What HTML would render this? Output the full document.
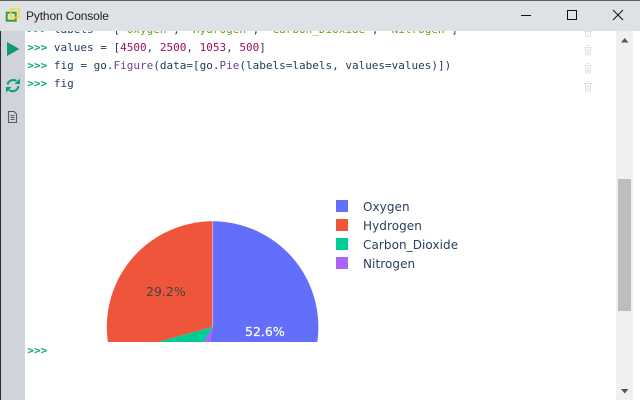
<!DOCTYPE html>
<html><head><meta charset="utf-8"><style>
html,body{margin:0;padding:0;width:640px;height:400px;overflow:hidden;background:#fff}
.a{position:absolute}
#code{overflow:hidden}
#code div{position:absolute;left:27.4px;white-space:pre;font:11px/18px "DejaVu Sans Mono","Liberation Mono",monospace;color:#1f3a5a}
.p{color:#10a37f;font-weight:bold}.n{color:#990f5f}.s{color:#5aa800}.f{color:#6b3fa0}
.lg{position:absolute;left:363px;font:12px/16px "DejaVu Sans",sans-serif;color:#2a3f5f;letter-spacing:.07px}
</style></head><body>
<div id="code" class="a" style="left:0;top:0;width:640px;height:400px">
<div style="top:21px"><span class="p">&gt;&gt;&gt;</span> labels = [<span class="s">'Oxygen'</span>, <span class="s">'Hydrogen'</span>, <span class="s">'Carbon_Dioxide'</span>, <span class="s">'Nitrogen'</span>]</div>
<div style="top:39px"><span class="p">&gt;&gt;&gt;</span> values = [<span class="n">4500</span>, <span class="n">2500</span>, <span class="n">1053</span>, <span class="n">500</span>]</div>
<div style="top:57px"><span class="p">&gt;&gt;&gt;</span> fig = go.<span class="f">Figure</span>(data=[go.<span class="f">Pie</span>(labels=labels, values=values)])</div>
<div style="top:75px"><span class="p">&gt;&gt;&gt;</span> fig</div>
<div style="top:342px"><span class="p">&gt;&gt;&gt;</span></div>
</div>
<svg class="a" style="left:0;top:0" width="640" height="400" viewBox="0 0 640 400">
<path d="M212.6 327V221.300A105.700 105.700 0 0 1 317.300 342H210.100Z" fill="#636efa"/>
<path d="M212.600 327L158 342H107.900A105.700 105.700 0 0 1 212.600 221.300Z" fill="#ef553b"/>
<path d="M212.600 327L203.800 342H158Z" fill="#00cc96"/>
<path d="M212.600 327L210.100 342H203.800Z" fill="#ab63fa"/>
<path d="M212.600 221.300V327" stroke="#fff" stroke-opacity=".45" stroke-width="1" fill="none"/>
<text x="146" y="296" font-family="DejaVu Sans,sans-serif" font-size="12.500" fill="#444">29.2%</text>
<text x="245" y="336" font-family="DejaVu Sans,sans-serif" font-size="12.500" fill="#fff" stroke="#fff" stroke-width=".2">52.6%</text>
<g fill="none" stroke="#e4e4e4" stroke-width="1">
<path d="M584 31.500h8M585.500 32v5M590.500 32v5M587.500 33v4M585 36.500h6"/>
<path d="M584 47.500h8M586.500 45.500h3M585.500 48v7h5v-7M587.500 49v5M589 49v5"/>
<path d="M584 65.500h8M586.500 63.500h3M585.500 66v7h5v-7M587.500 67v5M589 67v5"/>
<path d="M584 83.500h8M586.500 81.500h3M585.500 84v7h5v-7M587.500 85v5M589 85v5"/>
</g>
</svg>
<div class="a" style="left:0;top:0;width:640px;height:1px;background:#5b5d61"></div>
<div class="a" style="left:0;top:1px;width:640px;height:30px;background:#dee1e6"></div>
<div class="a" style="left:0;top:31px;width:25px;height:369px;background:#d0d3d9"></div>
<div class="a" style="left:0;top:31px;width:1px;height:369px;background:#2a2c33"></div>
<div class="a" style="left:616px;top:31px;width:17px;height:369px;background:#f0f0f0"></div>
<div class="a" style="left:618px;top:179px;width:13px;height:132px;background:#bdbdbd"></div>
<svg class="a" style="left:0;top:0" width="640" height="400" viewBox="0 0 640 400">
<rect x="6.700" y="12.700" width="9" height="8" fill="none" stroke="#3f9a3a" stroke-width="2"/>
<rect x="10.700" y="9" width="8.500" height="8.500" fill="none" stroke="#f2dc1e" stroke-width="1.500"/>
<path d="M7 42L19.500 49L7 56Z" fill="#109a72"/>
<g fill="none" stroke="#109a72" stroke-width="2">
<path d="M7.500 84.500A6 6 0 0 1 16.500 81"/><path d="M18.500 86A6 6 0 0 1 9 90"/>
</g>
<path d="M14.500 84H20V78.500Z M11.500 87H6V92.500Z" fill="#109a72"/>
<g fill="none" stroke="#555b63" stroke-width="1.100">
<path d="M8.500 111.500H14L16.500 114V122.500H8.500Z"/><path d="M10.500 115.500h4M10.500 117.500h4M10.500 119.500h4"/>
</g>
<path d="M521 15.500H531" stroke="#111" stroke-width="1"/>
<rect x="567.500" y="10.500" width="9" height="9" fill="none" stroke="#111" stroke-width="1"/>
<path d="M613 10L623 20M623 10L613 20" stroke="#111" stroke-width="1"/>
<path d="M621 42.500L628.500 42.500L624.700 38Z" fill="#555"/>
<path d="M621 389L628.500 389L624.700 393.500Z" fill="#555"/>
<rect x="336" y="200" width="12" height="12" fill="#636efa"/>
<rect x="336" y="219" width="12" height="12" fill="#ef553b"/>
<rect x="336" y="238" width="12" height="12" fill="#00cc96"/>
<rect x="336" y="257" width="12" height="12" fill="#ab63fa"/>
</svg>
<div class="a" style="left:26px;top:8px;font:12px/16px 'Liberation Sans',sans-serif;color:#222;white-space:pre;letter-spacing:-.14px">Python Console</div>
<div class="lg" style="top:199px">Oxygen</div>
<div class="lg" style="top:218px">Hydrogen</div>
<div class="lg" style="top:237px">Carbon_Dioxide</div>
<div class="lg" style="top:256px">Nitrogen</div>
</body></html>
